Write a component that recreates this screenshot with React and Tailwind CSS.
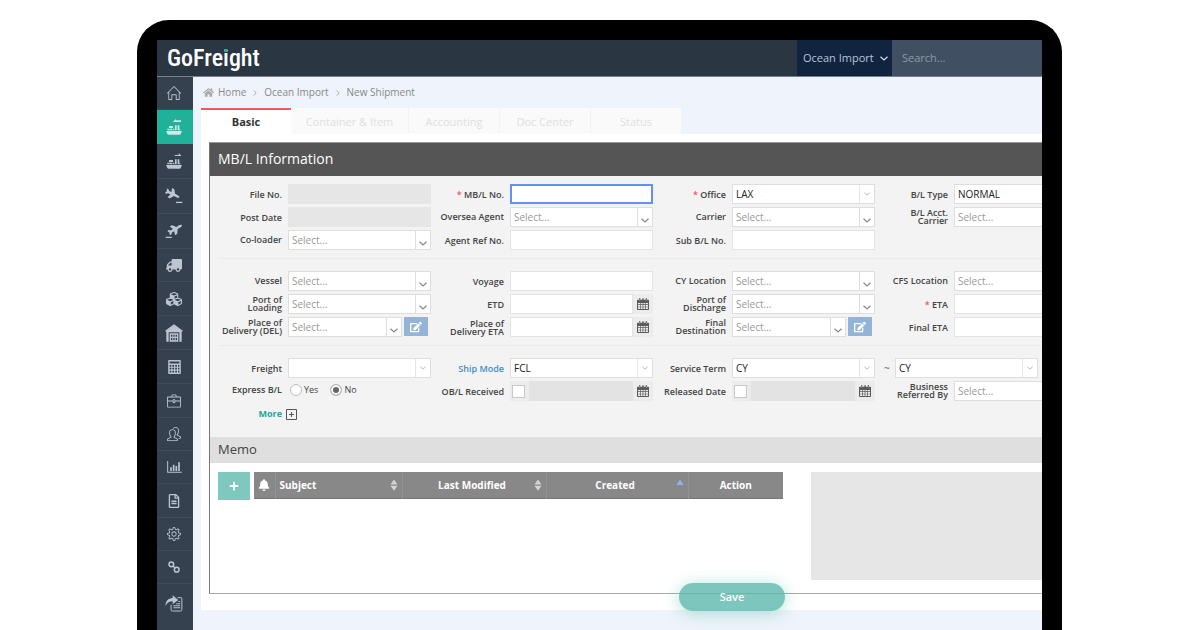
import { FaBell, FaCubes, FaEdit, FaHome, FaPlus, FaRegFileAlt, FaTruck } from "react-icons/fa";
import { SlBriefcase, SlHome, SlPeople, SlSettings } from "react-icons/sl";

/* ---------- icons ---------- */

function Ship({ outbound }) {
  return (
    <svg viewBox="0 0 48 48" className="size-4" fill="currentColor" aria-hidden="true">
      {outbound ? <path d="M26 6h12V0l9 9H26z" /> : <path d="M45 4H30V0L20 9h25z" />}
      <path d="M0 36h48l-4 9c-1 2-2 2-4 2H8c-2 0-3-1-4-2z" />
      <path d="M4 29h7v5H4zM12 29h7v5h-7zM9 21h12v6H9zM21 29h4v5h-4zM27 19h5v15h-5zM35 19h5v12h3v3h-8z" />
    </svg>
  );
}

const PLANE =
  "M480 192H365.71L260.61 8.06A16.014 16.014 0 0 0 246.71 0h-65.5c-10.63 0-18.3 10.17-15.38 20.39L214.86 192H112l-43.2-57.6c-3.02-4.03-7.77-6.4-12.8-6.4H16.01C5.6 128-2.04 137.78.49 147.88L32 256 .49 364.12C-2.04 374.22 5.6 384 16.01 384H56c5.04 0 9.78-2.37 12.8-6.4L112 320h102.86l-49.03 171.6c-2.92 10.22 4.75 20.4 15.38 20.4h65.5c5.74 0 11.04-3.08 13.89-8.06L365.71 320H480c35.35 0 96-28.65 96-64s-60.65-64-96-64z";

function Plane({ landing }) {
  return (
    <svg viewBox="0 0 54 50" className="h-4 w-[18px]" fill="currentColor" aria-hidden="true">
      {landing ? (
        <>
          <path transform="translate(23 19) rotate(26) scale(.082 .062) translate(-288 -256)" d={PLANE} />
          <path d="M33 43h20v4H33z" />
        </>
      ) : (
        <>
          <path transform="translate(31 19) rotate(-31) scale(.084 .062) translate(-288 -256)" d={PLANE} />
          <path d="M1 43h19v4H1z" />
        </>
      )}
    </svg>
  );
}

function Warehouse() {
  return (
    <svg viewBox="0 0 54 54" className="size-[18px]" aria-hidden="true">
      <path d="M2 22 27 4l25 18" fill="none" stroke="currentColor" strokeWidth="5" />
      <path
        fill="currentColor"
        fillRule="evenodd"
        d="M4 22 27 6l23 16v31h-7V25H11v28H4zM14 28h26v25H14zm4 4v6h4v-6zm7 0v6h4v-6zm7 0v6h4v-6zm-14 10v7h4v-7zm7 0v7h4v-7zm7 0v7h4v-7z"
      />
    </svg>
  );
}

function Calculator() {
  return (
    <svg viewBox="0 0 36 40" className="h-[14px] w-[13px]" aria-hidden="true">
      <path
        fill="currentColor"
        fillRule="evenodd"
        d="M2 0h32q2 0 2 2v36q0 2-2 2H2q-2 0-2-2V2q0-2 2-2zm2 4v6h28V4zm0 10v5h5v-5zm8 0v5h5v-5zm8 0v5h5v-5zm8 0v5h4v-5zM4 22v5h5v-5zm8 0v5h5v-5zm8 0v5h5v-5zm8 0v5h4v-5zM4 31v5h5v-5zm8 0v5h5v-5zm8 0v5h5v-5zm8 0v5h4v-5z"
      />
    </svg>
  );
}

function Bars() {
  return (
    <svg viewBox="0 0 44 36" className="h-3 w-[15px]" fill="currentColor" aria-hidden="true">
      <path d="M0 0h3v32h41v3H0zM9 19h5v11H9zM17 11h5v19h-5zM25 15h5v15h-5zM33 4h5v26h-5z" />
    </svg>
  );
}

function Chain() {
  return (
    <svg viewBox="0 0 36 36" className="size-3" fill="none" stroke="currentColor" strokeWidth="4.5" aria-hidden="true">
      <circle cx="10" cy="10" r="7" />
      <circle cx="26" cy="26" r="7" />
      <path d="m14 14 8 8" />
    </svg>
  );
}

function ShareDoc() {
  return (
    <svg viewBox="0 0 54 52" className="h-[17px] w-[18px]" aria-hidden="true">
      <path d="M38 8h10q3 0 3 3v34q0 4-4 4H22q-4 0-4-4V30" fill="none" stroke="currentColor" strokeWidth="3" />
      <path d="M40 20h6M34 27h12M25 33h21M25 39h21" stroke="currentColor" strokeWidth="3" />
      <path d="M1 34C1 18 9 10 23 9V1l17 14-17 13v-9C13 19 6 23 1 34z" fill="currentColor" />
    </svg>
  );
}

function CalendarIcon() {
  return (
    <svg viewBox="0 0 36 36" className="size-3" aria-hidden="true">
      <path
        fill="#5b5b5b"
        fillRule="evenodd"
        d="M2 5h32q2 0 2 2v27q0 2-2 2H2q-2 0-2-2V7q0-2 2-2zm1 10v4h6v-4zm8 0v4h6v-4zm8 0v4h6v-4zm8 0v4h6v-4zM3 21v5h6v-5zm8 0v5h6v-5zm8 0v5h6v-5zm8 0v5h6v-5zM3 28v5h6v-5zm8 0v5h6v-5zm8 0v5h6v-5zm8 0v5h6v-5z"
      />
      <path d="M8 1v9M18 1v9M28 1v9" stroke="#5b5b5b" strokeWidth="4" />
      <path d="M8 3v6M28 3v6" stroke="#e8e8e8" strokeWidth="1" />
    </svg>
  );
}

function Chevron({ className }) {
  return (
    <svg viewBox="0 0 16 10" className={className} fill="none" stroke="currentColor" strokeWidth="2.5" aria-hidden="true">
      <path d="m1 1.5 7 6.5 7-6.5" />
    </svg>
  );
}

function Sorter({ active }) {
  return (
    <svg viewBox="0 0 8 12" className="h-3 w-2 shrink-0" aria-hidden="true">
      {active ? (
        <path d="M0.5 6 4 0.5 7.5 6z" fill="#8ab4f8" />
      ) : (
        <path d="M0.5 5.5 4 .5l3.5 5zM0.5 6.7h7L4 11.7z" fill="#d4d4d4" />
      )}
    </svg>
  );
}

/* ---------- form pieces ---------- */

const LABEL = "w-[72px] shrink-0 whitespace-nowrap text-right text-[9px] leading-[8px] font-semibold text-[#444]";

function Field({ label, id, required, raised, link, children, className = "" }) {
  return (
    <div className={`flex h-5 items-center gap-1.5 pr-px ${className}`}>
      <label htmlFor={id} className={`${LABEL} ${raised ? "pb-px" : "pt-0.5"}`}>
        {required && <span className="text-[#f0525a]">* </span>}
        {link ? <span className="text-[#428bca]">{label}</span> : label}
      </label>
      {children}
    </div>
  );
}

function Text({ id, disabled, focused }) {
  return (
    <input
      id={id}
      type="text"
      disabled={disabled}
      className={`h-5 min-w-0 flex-1 px-1 text-[10px] outline-none ${
        disabled ? "bg-[#e6e6e6]" : focused ? "border-2 border-[#6590f2] bg-white" : "border border-[#e3e3e3] bg-white"
      }`}
    />
  );
}

function Lookup({ id, label }) {
  return (
    <div className="relative h-5 min-w-0 flex-1">
      <select
        id={id}
        aria-label={label}
        className="block h-5 w-full appearance-none border border-[#dedede] bg-white pl-[3px] text-[10px] text-[#999]"
      >
        <option>Select...</option>
      </select>
      <span className="pointer-events-none absolute inset-y-px right-px flex w-[15px] items-center justify-center border-l border-[#dedede] pt-1.5 text-[#8a8a8a]">
        <Chevron className="h-[5px] w-2" />
      </span>
    </div>
  );
}

function Choice({ id, value, label }) {
  return (
    <div className="relative h-5 min-w-0 flex-1">
      <select
        id={id}
        aria-label={label}
        className="block h-5 w-full appearance-none border border-[#dedede] bg-white pl-[3px] text-[10px] text-[#222]"
      >
        <option>{value}</option>
      </select>
      <span className="pointer-events-none absolute inset-y-px right-px flex w-[15px] items-center justify-center border-l border-[#e6e6e6] text-[#b5b5b5]">
        <Chevron className="h-1 w-1.5" />
      </span>
    </div>
  );
}

function LookupEdit({ id, label }) {
  return (
    <div className="flex min-w-0 flex-1 gap-0.5 pr-[3px]">
      <Lookup id={id} />
      <button type="button" aria-label={label} className="flex h-[19px] w-6 items-center justify-center bg-[#93b4d6] text-white">
        <FaEdit className="h-3 w-3" />
      </button>
    </div>
  );
}

function DateField({ id, label }) {
  return (
    <div className="flex min-w-0 flex-1 bg-[#ececec]">
      <input id={id} type="text" className="h-5 min-w-0 flex-1 border border-[#e3e3e3] bg-white px-1 text-[10px]" />
      <button type="button" aria-label={label} className="flex h-5 w-5 shrink-0 items-center justify-center">
        <CalendarIcon />
      </button>
    </div>
  );
}

function CheckedDate({ id, label }) {
  return (
    <div className="flex h-5 min-w-0 flex-1 items-center bg-[#ececec]">
      <input id={id} type="checkbox" className="ml-0.5 size-[13px] shrink-0 appearance-none border border-[#c8c8c8] bg-white" />
      <input type="text" disabled aria-label={label} className="ml-1 h-5 min-w-0 flex-1 bg-[#e3e3e3]" />
      <button type="button" aria-label={label} className="flex h-5 w-5 shrink-0 items-center justify-center">
        <CalendarIcon />
      </button>
    </div>
  );
}

function Radio({ children, checked }) {
  return (
    <label className="flex items-center gap-0.5 text-[9px] text-[#444]">
      <input
        type="radio"
        name="express"
        defaultChecked={checked}
        className="size-3 appearance-none rounded-full border border-[#bdbdbd] bg-white checked:bg-[#666] checked:shadow-[inset_0_0_0_2px_white]"
      />
      {children}
    </label>
  );
}

function Divider() {
  return <hr className="mt-2 mb-3 ml-2 border-[#ebebeb]" />;
}

const GRID = "grid w-max grid-cols-[repeat(4,222px)] gap-y-[3px]";

/* ---------- page sections ---------- */

const NAV = [
  { name: "Home", h: "h-[33px]", icon: <SlHome className="size-3.5" /> },
  { name: "Ocean Import", h: "h-[34px]", icon: <Ship />, active: true },
  { name: "Ocean Export", h: "h-[35px]", icon: <Ship outbound /> },
  { name: "Air Import", h: "h-[35px]", icon: <Plane landing /> },
  { name: "Air Export", h: "h-[35px]", icon: <Plane /> },
  { name: "Truck", h: "h-[33px]", icon: <FaTruck className="h-[15px] w-4 -scale-x-100" /> },
  { name: "Misc", h: "h-[34px]", icon: <FaCubes className="size-4" /> },
  { name: "Warehouse", h: "h-[34px]", icon: <Warehouse /> },
  { name: "Accounting", h: "h-[34px]", icon: <Calculator /> },
  { name: "Sales", h: "h-[34px]", icon: <SlBriefcase className="size-3.5" /> },
  { name: "Partners", h: "h-[33px]", icon: <SlPeople className="size-3.5" /> },
  { name: "Reports", h: "h-[33px]", icon: <Bars /> },
  { name: "Documents", h: "h-[34px]", icon: <FaRegFileAlt className="h-[14px] w-3" /> },
  { name: "Settings", h: "h-[33px]", icon: <SlSettings className="size-3.5" /> },
  { name: "Links", h: "h-[33px]", icon: <Chain /> },
  { name: "Share", h: "h-[38px]", icon: <ShareDoc /> },
];

function Sidebar() {
  return (
    <nav className="flex w-9 shrink-0 flex-col bg-[#364150]">
      {NAV.map((n) => (
        <a
          key={n.name}
          href="#"
          aria-label={n.name}
          className={`flex items-center justify-center pr-0.5 ${n.h} ${
            n.active ? "bg-[#1fb199] text-[#d5e6e6]" : "border-b border-[#3f4b5b] text-[#bcc5d0] last:border-b-0"
          }`}
        >
          {n.icon}
        </a>
      ))}
    </nav>
  );
}

function TopBar() {
  return (
    <header className="flex h-[37px] border-b border-[#77818e] bg-[#2b3643]">
      <a
        href="#"
        className="relative flex items-center pl-[10px] font-['Roboto_Condensed','Liberation_Sans_Narrow',sans-serif] text-[24px] leading-none font-medium text-white"
      >
        <span>GoFre</span>
        <span className="relative">
          i<span className="absolute top-[3px] left-px h-[3px] w-[3px] bg-[#1fb199]" />
        </span>
        <span>ght</span>
      </a>
      <div className="ml-auto flex">
        <button type="button" className="flex w-[95px] items-center gap-1.5 bg-[#10233f] pl-1.5 text-[11px] whitespace-nowrap text-[#b9c5d6]">
          Ocean Import
          <Chevron className="h-[5px] w-2 shrink-0 text-[#d5dbe4]" />
        </button>
        <input
          type="search"
          aria-label="Search"
          placeholder="Search..."
          className="w-[150px] bg-[#405062] pl-[10px] text-[11px] outline-none placeholder:text-[#8e99a8]"
        />
      </div>
    </header>
  );
}

function Crumbs() {
  return (
    <div className="flex h-[31px] items-center gap-1.5 pl-[10px] text-[10px] text-[#888]">
      <a href="#" className="flex items-center gap-1">
        <FaHome className="size-[11px] text-[#aaa]" />
        Home
      </a>
      <Chevron className="h-1 w-1.5 -rotate-90 text-[#aaa]" />
      <a href="#">Ocean Import</a>
      <Chevron className="h-1 w-1.5 -rotate-90 text-[#aaa]" />
      <span>New Shipment</span>
    </div>
  );
}

function Tabs() {
  const idle = "border-r border-[#f3f3f5] bg-[#fafafa] pt-0.5 text-[#e0e0e0]";
  return (
    <div role="tablist" className="flex h-[26px] pl-2 text-[11px]">
      <button type="button" role="tab" aria-selected="true" className="w-[90px] border-t-2 border-[#f5565f] bg-white font-bold text-[#333]">
        Basic
      </button>
      <button type="button" role="tab" className={`w-[118px] ${idle}`}>Container &amp; Item</button>
      <button type="button" role="tab" className={`w-[91px] ${idle}`}>Accounting</button>
      <button type="button" role="tab" className={`w-[91px] ${idle}`}>Doc Center</button>
      <button type="button" role="tab" className={`w-[91px] ${idle}`}>Status</button>
    </div>
  );
}

function ShipmentForm() {
  return (
    <form className="h-[261px] overflow-hidden bg-[#f3f3f3] pt-2">
      <div className={GRID}>
        <Field label="File No." id="file"><Text id="file" disabled /></Field>
        <Field label="MB/L No." id="mbl" required><Text id="mbl" focused /></Field>
        <Field label="Office" id="office" required><Choice id="office" value="LAX" /></Field>
        <Field label="B/L Type" id="bltype"><Choice id="bltype" value="NORMAL" /></Field>

        <Field label="Post Date" id="post"><Text id="post" disabled /></Field>
        <Field label="Oversea Agent" id="agent" raised><Lookup id="agent" /></Field>
        <Field label="Carrier" id="carrier" raised><Lookup id="carrier" /></Field>
        <Field label={<>B/L Acct.<br />Carrier</>} id="acct" raised><Lookup id="acct" /></Field>

        <Field label="Co-loader" id="coloader" raised><Lookup id="coloader" /></Field>
        <Field label="Agent Ref No." id="ref"><Text id="ref" /></Field>
        <Field label="Sub B/L No." id="sub"><Text id="sub" /></Field>
      </div>
      <Divider />
      <div className={GRID}>
        <Field label="Vessel" id="vessel" raised><Lookup id="vessel" /></Field>
        <Field label="Voyage" id="voyage"><Text id="voyage" /></Field>
        <Field label="CY Location" id="cy" raised><Lookup id="cy" /></Field>
        <Field label="CFS Location" id="cfs" raised><Lookup id="cfs" /></Field>

        <Field label={<>Port of<br />Loading</>} id="pol" raised><Lookup id="pol" /></Field>
        <Field label="ETD" id="etd"><DateField id="etd" label="Pick ETD" /></Field>
        <Field label={<>Port of<br />Discharge</>} id="pod" raised><Lookup id="pod" /></Field>
        <Field label="ETA" id="eta" required><DateField id="eta" label="Pick ETA" /></Field>

        <Field label={<>Place of<br />Delivery (DEL)</>} id="del" raised><LookupEdit id="del" label="Edit place of delivery" /></Field>
        <Field label={<>Place of<br />Delivery ETA</>} id="deleta"><DateField id="deleta" label="Pick delivery ETA" /></Field>
        <Field label={<>Final<br />Destination</>} id="dest" raised><LookupEdit id="dest" label="Edit final destination" /></Field>
        <Field label="Final ETA" id="feta"><DateField id="feta" label="Pick final ETA" /></Field>
      </div>
      <Divider />
      <div className={GRID}>
        <Field label="Freight" id="freight"><Choice id="freight" value="" /></Field>
        <Field label="Ship Mode" id="mode" link><Choice id="mode" value="FCL" /></Field>
        <Field label="Service Term" id="term"><Choice id="term" value="CY" /></Field>
        <div className="flex h-5 items-center pr-[60px] text-[10px] text-[#666]">
          <span className="w-[19px] pl-2">~</span>
          <Choice value="CY" label="Service term to" />
        </div>

        <div className="flex h-5 items-center gap-1.5 pb-0.5">
          <span className={LABEL}>Express B/L</span>
          <div className="flex gap-3 pl-0.5">
            <Radio>Yes</Radio>
            <Radio checked>No</Radio>
          </div>
        </div>
        <Field label="OB/L Received" id="obl"><CheckedDate id="obl" label="OB/L received date" /></Field>
        <Field label="Released Date" id="rel"><CheckedDate id="rel" label="Released on" /></Field>
        <Field label={<>Business<br />Referred By</>} id="biz" raised><Lookup id="biz" /></Field>

        <button type="button" className="flex h-5 items-center gap-1 text-left">
          <span className="w-[72px] text-right text-[9px] font-bold text-[#26a69a]">More</span>
          <svg viewBox="0 0 11 11" className="size-[11px]" fill="none" stroke="#555" aria-hidden="true">
            <path d="M.5.5h10v10H.5zM3 5.5h5M5.5 3v5" />
          </svg>
        </button>
      </div>
    </form>
  );
}

function Memo() {
  const th = "border-r border-[#939393] px-1 font-bold";
  return (
    <section>
      <h2 className="flex h-[26px] items-center bg-[#dfdfdf] pl-2 text-[13px] text-[#444]">Memo</h2>
      <div className="flex items-start pt-[9px] pb-[13px] pl-2">
        <button type="button" aria-label="Add memo" className="flex h-7 w-8 shrink-0 items-center justify-center bg-[#7ec8c0] text-white">
          <FaPlus className="size-[10px]" />
        </button>
        <table className="ml-1 h-[27px] w-[529px] shrink-0 table-fixed border-b border-[#777] bg-[#888] text-[10px] text-white">
          <thead>
            <tr>
              <th aria-label="Reminder" className={`w-[21px] ${th}`}><FaBell className="size-3" /></th>
              <th className={`w-[127px] ${th}`}>
                <span className="flex items-center justify-between">Subject<Sorter /></span>
              </th>
              <th className={`w-[144px] ${th}`}>
                <span className="flex items-center pl-1"><span className="flex-1">Last Modified</span><Sorter /></span>
              </th>
              <th className={`w-[142px] ${th}`}>
                <span className="flex items-center pl-1"><span className="flex-1">Created</span><Sorter active /></span>
              </th>
              <th className="px-1 font-bold">Action</th>
            </tr>
          </thead>
        </table>
        <textarea aria-label="Memo text" className="ml-7 h-[108px] flex-1 resize-none bg-[#e6e6e6] outline-none" />
      </div>
    </section>
  );
}

export default function App() {
  return (
    <div className="flex min-h-screen bg-white pt-5 pr-[138px] pl-[137px] font-['Open_Sans',sans-serif]">
      <div className="flex min-w-0 flex-1 flex-col rounded-t-[32px] border-x-20 border-t-20 border-black bg-black">
        <TopBar />
        <div className="flex flex-1">
          <Sidebar />
          <main className="min-w-0 flex-1 overflow-hidden bg-[#eff3fb]">
            <Crumbs />
            <Tabs />
            <div className="relative ml-2 bg-white pt-2 pb-4 pl-2">
              <div className="border-t border-b border-l border-t-[#999] border-b-[#aaa] border-l-[#777]">
                <h1 className="flex h-[33px] items-center bg-[#555] pb-0.5 pl-2 text-[14px] text-white">MB/L Information</h1>
                <ShipmentForm />
                <Memo />
              </div>
              <button
                type="button"
                className="absolute -bottom-px left-[478px] h-7 w-[106px] rounded-full bg-[#5bb8ae]/80 text-[11px] font-semibold text-white shadow-[0_2px_16px_rgba(80,190,170,0.45)]"
              >
                Save
              </button>
            </div>
          </main>
        </div>
      </div>
    </div>
  );
}
